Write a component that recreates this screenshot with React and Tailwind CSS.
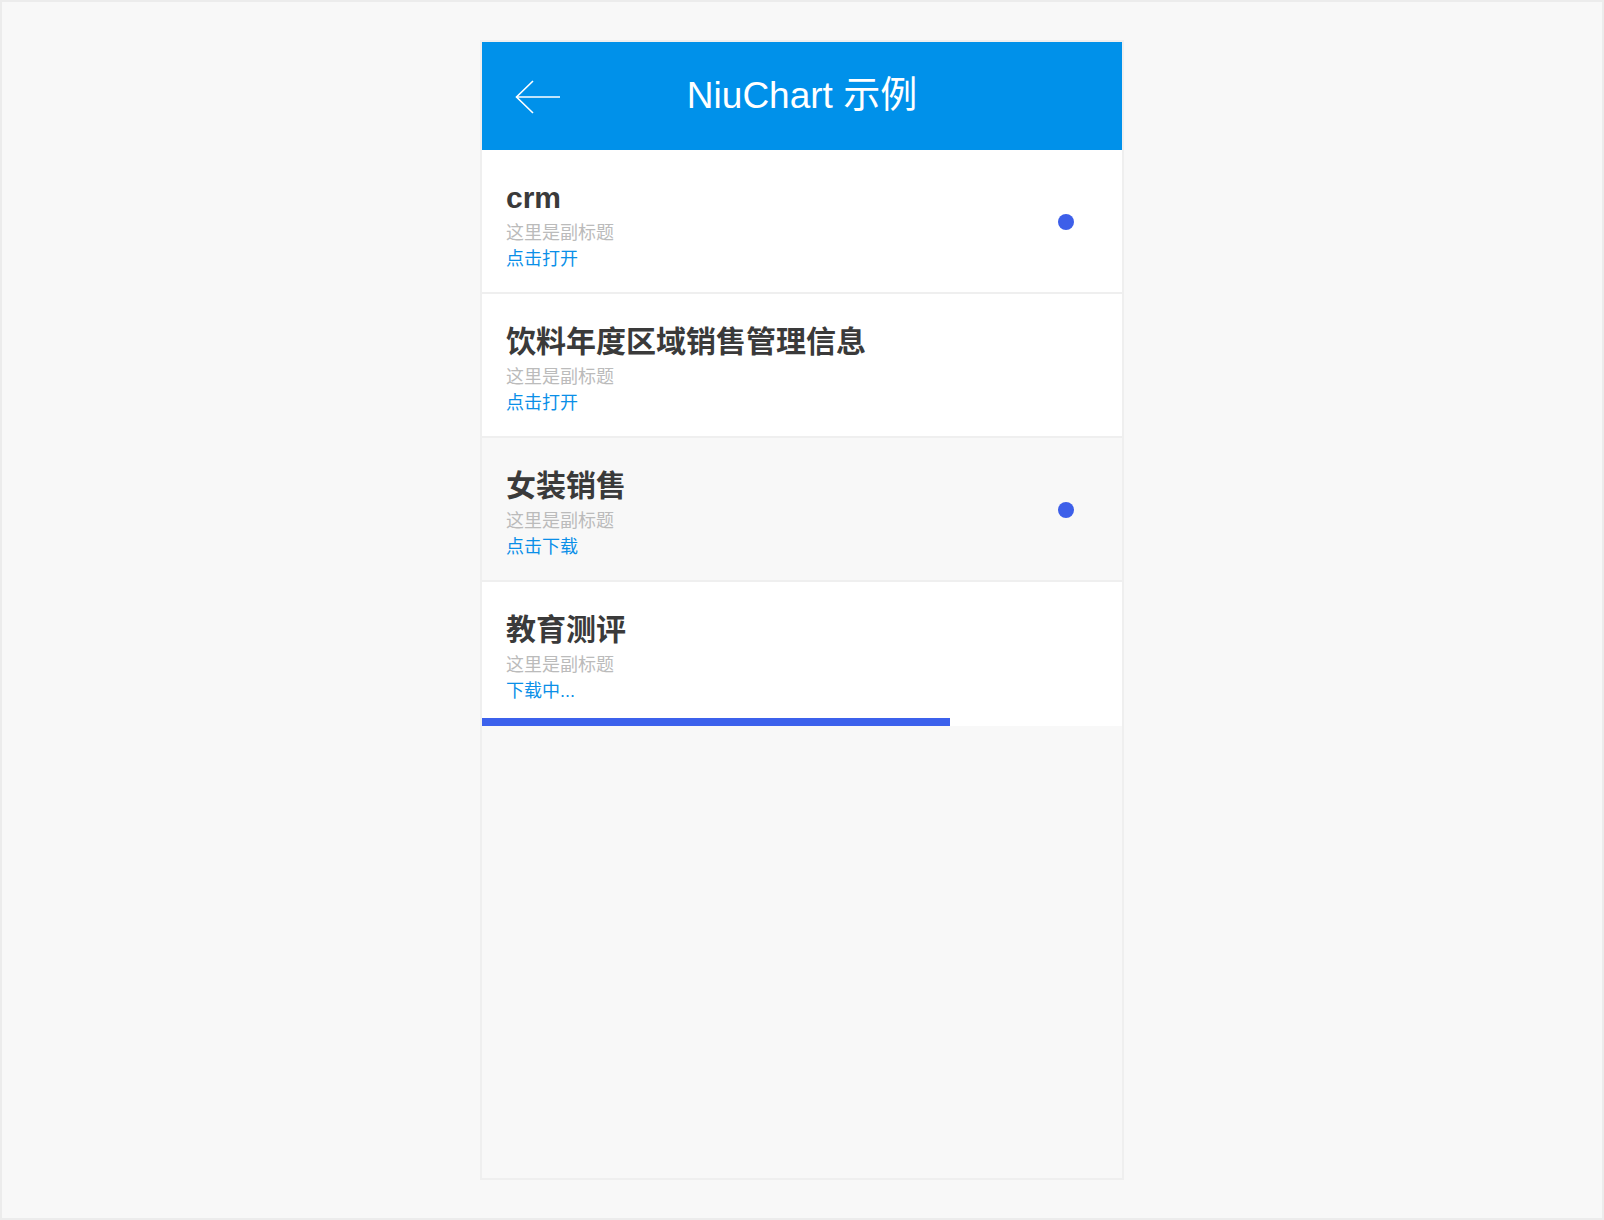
import React from "react";

const font = { fontFamily: '"Liberation Sans", "Noto Sans CJK SC", sans-serif' };

function Row({ title, link, dot, grey }) {
  return (
    <div className={(grey ? "bg-[#f8f8f8]" : "bg-white") + " border-b-2 border-[#efefef]"}>
      <div className="relative flex items-center h-[142px] px-[24px] pt-[8px]">
        <div className="flex flex-col">
          <div className="text-[30px] leading-[40px] font-bold text-[#3a3a3a]">{title}</div>
          <div className="text-[18px] leading-[26px] text-[#bbbbbb] mt-[2px]">这里是副标题</div>
          <div className="text-[18px] leading-[26px] text-[#0a8fe8]">{link}</div>
        </div>
        {dot && (
          <div className="absolute right-[48px] top-[64px] w-[16px] h-[16px] rounded-full bg-[#3d5fe9]" />
        )}
      </div>
    </div>
  );
}

export default function App() {
  return (
    <div
      className="w-[1604px] h-[1220px] border-2 border-[#ececec] bg-[#f8f8f8] flex justify-center pt-[38px]"
      style={font}
    >
      <div className="w-[644px] h-[1140px] border-2 border-[#efefef] bg-[#f8f8f8] flex flex-col">
        <div className="relative h-[108px] bg-[#0091ea] flex items-center justify-center">
          <svg
            className="absolute left-[33px] top-[38px]"
            width="46"
            height="34"
            viewBox="0 0 46 34"
            fill="none"
            stroke="white"
            strokeWidth="1.6"
          >
            <path d="M1.5 17 H45" />
            <path d="M18 1 L1.5 17 L18 33" />
          </svg>
          <div className="text-white text-[37px] leading-[44px]">NiuChart 示例</div>
        </div>
        <Row title="crm" link="点击打开" dot />
        <Row title="饮料年度区域销售管理信息" link="点击打开" />
        <Row title="女装销售" link="点击下载" dot grey />
        <div className="bg-white">
          <div className="flex items-center h-[136px] px-[24px] pt-[14px]">
            <div className="flex flex-col">
              <div className="text-[30px] leading-[40px] font-bold text-[#3a3a3a]">教育测评</div>
              <div className="text-[18px] leading-[26px] text-[#bbbbbb] mt-[2px]">这里是副标题</div>
              <div className="text-[18px] leading-[26px] text-[#0a8fe8]">下载中...</div>
            </div>
          </div>
          <div className="h-[8px] bg-white">
            <div className="h-[8px] w-[73.1%] bg-[#3c61ec]" />
          </div>
        </div>
      </div>
    </div>
  );
}
